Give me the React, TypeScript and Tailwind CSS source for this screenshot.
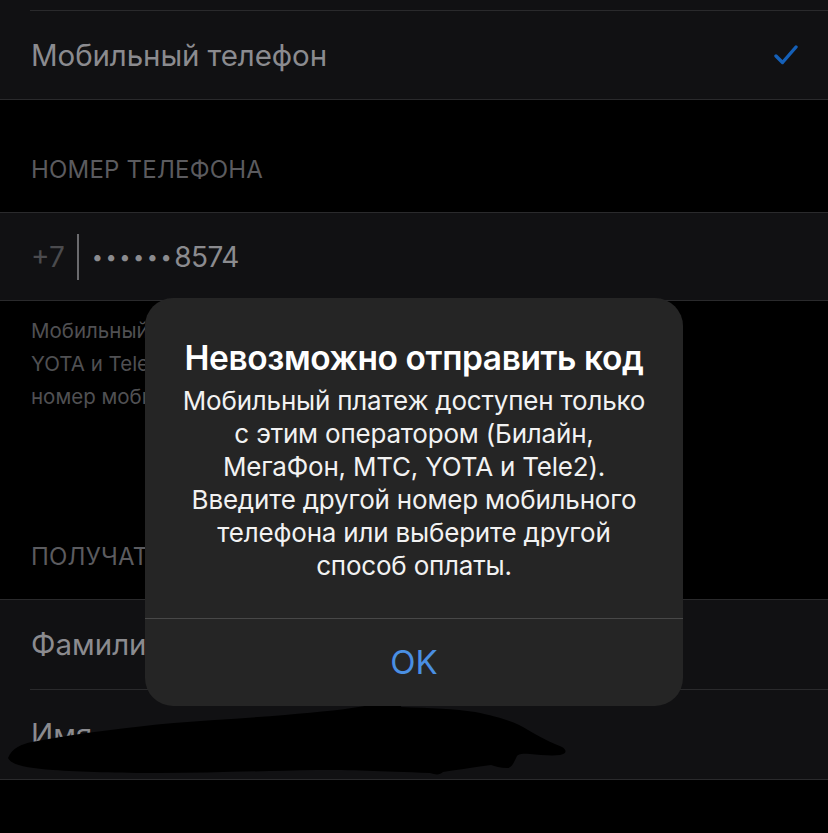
import React from "react";

export default function App() {
  return (
    <div
      className="relative w-[828px] h-[833px] overflow-hidden bg-black"
      style={{ fontFamily: "Inter, 'Noto Sans', sans-serif" }}
    >
      {/* Mobile phone row */}
      <div className="bg-[#111113]">
        <div className="h-[10px]" />
        <div className="ml-[30px] h-px bg-[#2a2a2c]" />
        <div className="h-[88px] flex items-center justify-between pl-[31px] pr-[30px]">
          <span className="text-[29.5px] text-[#8b8b8f] tracking-[-0.1px]">Мобильный телефон</span>
          <svg width="24" height="22" viewBox="0 0 24 22">
            <polyline
              points="2,12 8.5,18.5 22,3"
              fill="none"
              stroke="#1560b8"
              strokeWidth="3.4"
              strokeLinecap="round"
              strokeLinejoin="round"
            />
          </svg>
        </div>
      </div>
      <div className="h-px bg-[#2a2a2c]" />

      {/* Header */}
      <div className="h-[112px] pt-[55px] pl-[31px]">
        <div className="text-[24px] leading-[30px] text-[#5b5b5f] tracking-[0.2px]">НОМЕР ТЕЛЕФОНА</div>
      </div>
      <div className="h-px bg-[#2a2a2c]" />

      {/* Phone input */}
      <div className="h-[87px] bg-[#111113] flex items-center pl-[31px]">
        <span className="text-[28px] text-[#4b4b4e]">+7</span>
        <div className="ml-[12px] w-[2px] h-[46px] bg-[#6b6b6e]" />
        <span className="ml-[13px] text-[20px] text-[#8b8b8f] tracking-[2.5px]">••••••</span>
        <span className="text-[28px] text-[#8b8b8f] tracking-[-0.5px]">8574</span>
      </div>
      <div className="h-px bg-[#2a2a2c]" />

      {/* Footer text */}
      <div className="pt-[13px] pl-[31px] text-[20.5px] leading-[33px] text-[#505053] whitespace-nowrap">
        <div>Мобильный платеж доступен для Билайн, МегаФон, МТС,</div>
        <div>YOTA и Tele2. Код подтверждения будет отправлен на Ваш</div>
        <div>номер мобильного телефона.</div>
      </div>

      {/* Recipient header */}
      <div className="h-[186px] pt-[129px] pl-[31px]">
        <div className="text-[24px] leading-[30px] text-[#5b5b5f] tracking-[0.2px]">ПОЛУЧАТЕЛЬ</div>
      </div>
      <div className="h-px bg-[#2a2a2c]" />
      <div className="bg-[#111113]">
        <div className="h-[89px] flex items-center pl-[31px] text-[29.5px] text-[#8b8b8f]">Фамилия</div>
        <div className="ml-[30px] h-px bg-[#2a2a2c]" />
        <div className="h-[89px] flex items-center pl-[31px] text-[29.5px] text-[#8b8b8f]">Имя</div>
      </div>
      <div className="h-px bg-[#2a2a2c]" />

      {/* Redaction scribble */}
      <svg className="absolute left-0 top-0" width="828" height="833" viewBox="0 0 828 833">
        <path
          d="M8,758 C12,748 22,744 32,742 C80,733 130,727 174,723 C210,720 250,718 285,715 C320,712 350,709 370,705 C385,702 395,700 399,702 C402,704 401,706 401,707 C430,708 455,709 475,712 C500,717 515,722 528,730 C545,740 555,744 562,747 C567,750 567,754 560,755 C552,756 540,755 530,754 C520,753 518,755 517,756 C514,762 512,768 507,768 C500,768 495,766 491,765 C470,768 455,770 443,772 C440,775 436,775 430,773 C380,771 350,770 317,770 C260,771 210,773 158,773 C120,773 80,772 53,770 C30,768 12,766 8,758 Z"
          fill="#000"
        />
      </svg>

      {/* Alert */}
      <div className="absolute left-[145px] top-[298px] w-[538px] h-[408px] rounded-[28px] bg-[#252525] flex flex-col">
        <div className="h-[320px] flex flex-col items-center pt-[40px]">
          <div className="text-[33.5px] leading-[40px] font-semibold text-white tracking-[-0.4px] whitespace-nowrap">
            Невозможно отправить код
          </div>
          <div className="mt-[6px] text-[26px] leading-[33px] text-[#f2f2f2] text-center tracking-[-0.2px] whitespace-nowrap">
            <div>Мобильный платеж доступен только</div>
            <div>с этим оператором (Билайн,</div>
            <div>МегаФон, МТС, YOTA и Tele2).</div>
            <div>Введите другой номер мобильного</div>
            <div>телефона или выберите другой</div>
            <div>способ оплаты.</div>
          </div>
        </div>
        <div className="h-px bg-[#484848]" />
        <div className="flex-1 flex items-center justify-center text-[33px] text-[#4a8fe3]">OK</div>
      </div>
    </div>
  );
}
